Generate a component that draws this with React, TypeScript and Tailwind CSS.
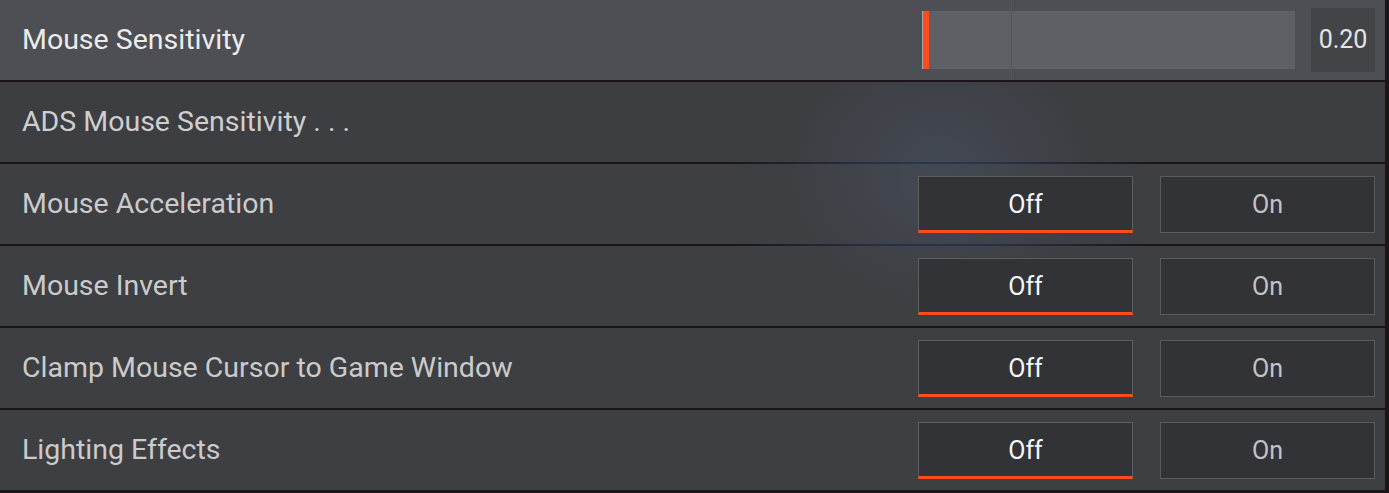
import React from 'react';

const font = { fontFamily: 'Roboto, "Noto Sans", sans-serif' };

const toggles = [
  'Mouse Acceleration',
  'Mouse Invert',
  'Clamp Mouse Cursor to Game Window',
  'Lighting Effects',
];

function Toggle() {
  return (
    <div className="flex items-center gap-[27px]">
      <button className="w-[215px] h-[57px] bg-[#323337] border border-[#5b605f] border-b-[3px] border-b-[#ff4c1c] text-[#f7f7f7] text-[25px] leading-none flex items-center justify-center pt-[2px]">
        Off
      </button>
      <button className="w-[215px] h-[57px] bg-[#323337] border border-[#585c5c] text-[#c4c4c4] text-[25px] leading-none flex items-center justify-center">
        On
      </button>
    </div>
  );
}

export default function App() {
  return (
    <div className="w-[1389px] h-[493px] bg-[#1b151a] bg-[radial-gradient(ellipse_220px_120px_at_940px_200px,rgba(50,75,115,0.9),transparent)] overflow-hidden" style={font}>
      <div className="w-[1385px] flex flex-col gap-[2px]">
        {/* Mouse Sensitivity (focused row) */}
        <div className="h-[80px] bg-[#4e4f54] flex items-center justify-between pl-[22px] pr-[10px]">
          <span className="text-[28.5px] text-[#ececec]">Mouse Sensitivity</span>
          <div className="flex items-center gap-[16px] h-full">
            <div className="relative w-[373px] h-[58px] bg-[#5f6065]">
              <div className="absolute left-0 top-0 w-[1px] h-full bg-[#a3a3a3]" />
              <div className="absolute left-[1px] top-0 w-[6px] h-full bg-[#ff4c1c]" />
              <div className="absolute left-[89px] -top-[11px] w-[1px] h-[80px] bg-[#56585a]" />
            </div>
            <div className="w-[64px] h-[64px] bg-[#434448] flex items-center justify-center text-[25px] text-[#e4e4e4]">
              0.20
            </div>
          </div>
        </div>

        {/* ADS */}
        <div className="h-[80px] bg-[#3d3e42] bg-[radial-gradient(ellipse_150px_130px_at_940px_170px,rgba(78,96,122,0.3),transparent)] bg-fixed flex items-center pl-[22px]">
          <span className="text-[28.5px] text-[#cfcfcf]">ADS Mouse Sensitivity . . .</span>
        </div>

        {toggles.map((label) => (
          <div
            key={label}
            className="h-[80px] bg-[#3e3f43] bg-[radial-gradient(ellipse_150px_130px_at_940px_170px,rgba(78,96,122,0.3),transparent)] bg-fixed flex items-center justify-between pl-[22px] pr-[10px]"
          >
            <span className="text-[28.5px] text-[#cbcbcb]">{label}</span>
            <Toggle />
          </div>
        ))}
      </div>
    </div>
  );
}
